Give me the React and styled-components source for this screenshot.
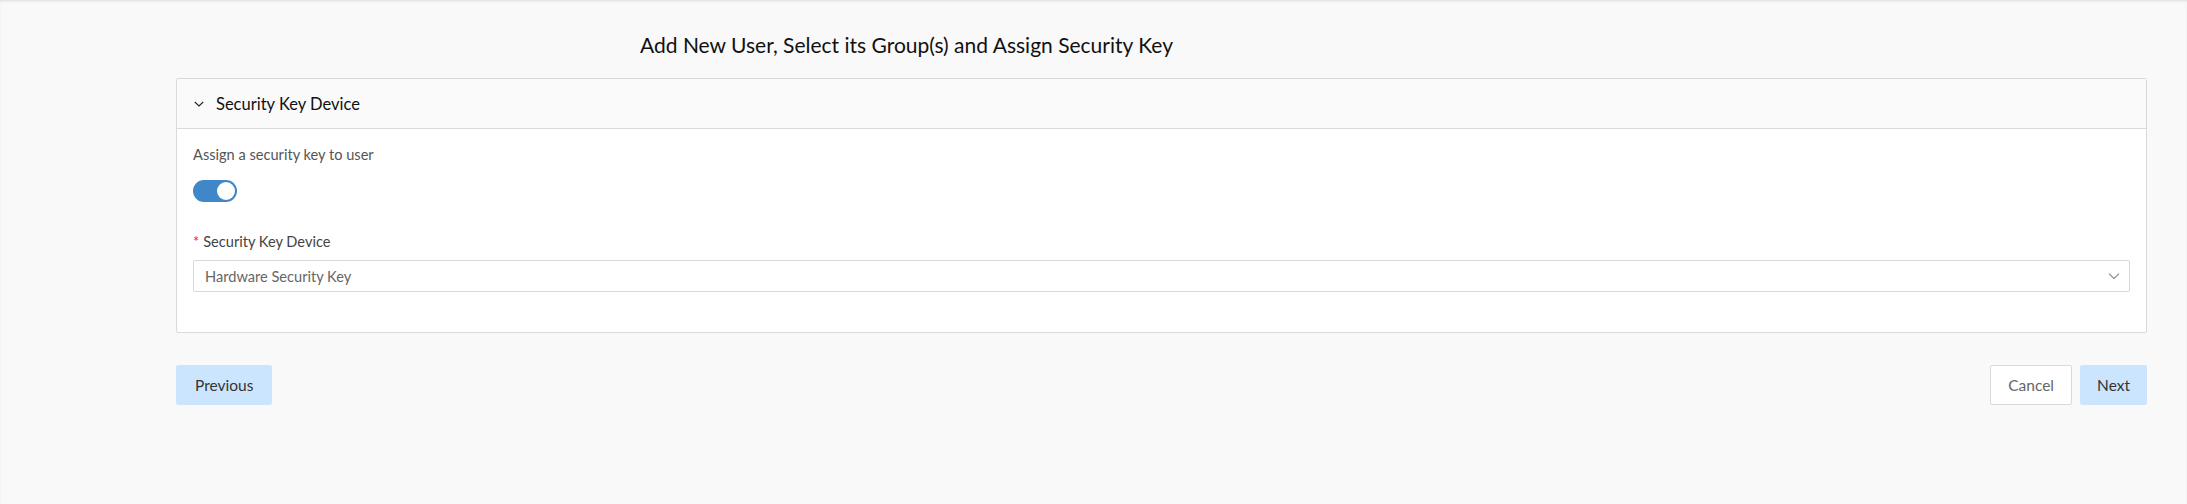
import React, { useState } from "react";
import styled, { createGlobalStyle } from "styled-components";

const Global = createGlobalStyle`
  html, body { margin: 0; padding: 0; }
  body {
    background: #f9f9f9;
    font-family: Lato, "Open Sans", sans-serif;
    color: #222;
  }
`;

const Page = styled.div`
  min-height: 504px;
  box-sizing: border-box;
  box-shadow: inset 0 2px 3px -1px rgba(0,0,0,0.12);
  padding: 33px 40px 0 176px;
`;

const Title = styled.h1`
  margin: 0 0 21px 464px;
  font-size: 21px;
  line-height: 24px;
  font-weight: 400;
  color: #111;
`;

const Panel = styled.section`
  border: 1px solid #dadada;
  border-radius: 2px;
  background: #fff;
`;

const PanelHeader = styled.div`
  height: 49px;
  display: flex;
  align-items: center;
  gap: 12px;
  padding-left: 17px;
  background: #fafafa;
  border-bottom: 1px solid #dadada;
  font-size: 16.5px;
  color: #111;
`;

const PanelBody = styled.div`
  padding: 16px 16px 40px;
`;

const Label = styled.div`
  font-size: 14.6px;
  line-height: 20px;
  color: ${(p) => p.$color || "#555"};
  margin-bottom: ${(p) => p.$mb || 0}px;
`;

const Required = styled.span`
  color: #f5222d;
  margin-right: 4px;
`;

const Switch = styled.button`
  display: block;
  width: 44px;
  height: 22px;
  margin: 15px 0 30px;
  padding: 0;
  border: none;
  border-radius: 11px;
  background: ${(p) => (p.$on ? "#3f87c9" : "#bfbfbf")};
  position: relative;
  cursor: pointer;
  &::after {
    content: "";
    position: absolute;
    top: 2px;
    left: ${(p) => (p.$on ? "24px" : "2px")};
    width: 18px;
    height: 18px;
    border-radius: 50%;
    background: #fff;
  }
`;

const Select = styled.div`
  height: 32px;
  box-sizing: border-box;
  border: 1px solid #d9d9d9;
  border-radius: 2px;
  display: flex;
  align-items: center;
  justify-content: space-between;
  padding: 0 9px 0 11px;
  font-size: 14.6px;
  color: #666;
  background: #fff;
`;

const Actions = styled.div`
  display: flex;
  align-items: center;
  margin-top: 32px;
`;

const Spacer = styled.div`
  flex: 1;
`;

const Button = styled.button`
  height: 40px;
  padding: 0 ${(p) => p.$px || 16}px;
  margin-left: ${(p) => p.$ml || 0}px;
  border-radius: 2px;
  font-family: inherit;
  font-size: 15.5px;
  color: ${(p) => (p.$primary ? "#333" : "#666")};
  background: ${(p) => (p.$primary ? "#cce5ff" : "#fff")};
  border: 1px solid ${(p) => (p.$primary ? "#cce5ff" : "#d9d9d9")};
  cursor: pointer;
`;

const Chevron = ({ size = 10, color = "#333", sw = 1.1 }) => (
  <svg width={size} height={size} viewBox="0 0 10 10" fill="none">
    <path d="M0.8 3 L5 7 L9.2 3" stroke={color} strokeWidth={sw} />
  </svg>
);

export default function App() {
  const [on, setOn] = useState(true);
  return (
    <>
      <Global />
      <Page>
        <Title>Add New User, Select its Group(s) and Assign Security Key</Title>
        <Panel>
          <PanelHeader>
            <Chevron size={10} color="#222" />
            <span>Security Key Device</span>
          </PanelHeader>
          <PanelBody>
            <Label>Assign a security key to user</Label>
            <Switch $on={on} onClick={() => setOn(!on)} aria-label="toggle" />
            <Label $color="#444" $mb={8}>
              <Required>*</Required>Security Key Device
            </Label>
            <Select>
              <span>Hardware Security Key</span>
              <Chevron size={12} color="#888" sw={0.9} />
            </Select>
          </PanelBody>
        </Panel>
        <Actions>
          <Button $primary $px={18}>Previous</Button>
          <Spacer />
          <Button $px={17}>Cancel</Button>
          <Button $primary $px={16} $ml={8}>Next</Button>
        </Actions>
      </Page>
    </>
  );
}
